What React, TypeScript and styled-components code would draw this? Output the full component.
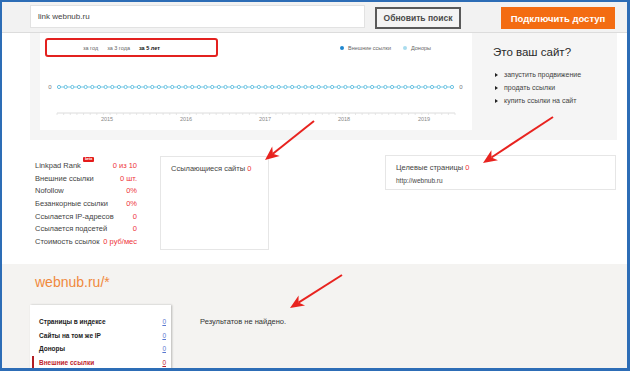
import React from "react";
import styled, { createGlobalStyle } from "styled-components";

const GlobalStyle = createGlobalStyle`
  html, body {
    margin: 0;
    padding: 0;
    background: #ffffff;
  }
  body {
    font-family: "Liberation Sans", Arial, sans-serif;
    color: #333;
  }
  * {
    box-sizing: border-box;
  }
`;

const Frame = styled.div`
  position: relative;
  width: 630px;
  height: 371px;
  border-top: 2px solid #2d6db6;
  border-left: 2px solid #2d6db6;
  border-right: 3px solid #2d6db6;
  border-bottom: 3px solid #2d6db6;
  overflow: hidden;
  display: flex;
  flex-direction: column;
  background: #fff;
`;

/* ---------- top bar ---------- */
const TopBar = styled.div`
  height: 31px;
  flex: none;
  background: #f2f2f2;
  border-bottom: 1px solid #dcdcdc;
  display: flex;
  align-items: flex-start;
  padding: 3px 0 0 28px;
`;

const SearchInput = styled.div`
  width: 335px;
  height: 23px;
  background: #fff;
  border: 1px solid #e2e2e2;
  display: flex;
  align-items: center;
  padding-left: 7px;
  font-size: 8px;
  color: #444;
`;

const RefreshButton = styled.div`
  margin: 2px 0 0 10px;
  width: 86px;
  height: 22px;
  border: 2px solid #5a5a5a;
  background: #f4f4f4;
  display: flex;
  align-items: center;
  justify-content: center;
  font-size: 8.5px;
  font-weight: bold;
  color: #4a4a4a;
`;

const AccessButton = styled.div`
  margin: 2px 0 0 40px;
  width: 114px;
  height: 22px;
  background: #f36c12;
  display: flex;
  align-items: center;
  justify-content: center;
  font-size: 9.5px;
  font-weight: bold;
  color: #fff;
`;

/* ---------- hero with chart ---------- */
const Hero = styled.div`
  height: 107px;
  flex: none;
  padding: 0 10px 0 28px;
  display: flex;
`;

const HeroInner = styled.div`
  flex: 1;
  background: #f5f5f5;
  display: flex;
  align-items: flex-start;
`;

const ChartPanel = styled.div`
  margin-left: 10px;
  width: 432px;
  height: 97px;
  background: #fff;
  display: flex;
  flex-direction: column;
`;

const ChartHeader = styled.div`
  height: 29px;
  padding: 5px 0 0 5px;
  display: flex;
  align-items: flex-start;
`;

const Tabs = styled.div`
  width: 173px;
  height: 19px;
  border: 2px solid #e3211f;
  border-radius: 3px;
  display: flex;
  align-items: center;
  padding-left: 36px;
  gap: 9px;
`;

const Tab = styled.span<{ $active?: boolean }>`
  font-size: 5.5px;
  color: ${(p) => (p.$active ? "#111" : "#666")};
  font-weight: ${(p) => (p.$active ? "bold" : "normal")};
`;

const Legend = styled.div`
  margin-left: 122px;
  height: 19px;
  display: flex;
  align-items: center;
  gap: 12px;
`;

const LegendItem = styled.span<{ $color: string }>`
  display: flex;
  align-items: center;
  gap: 4px;
  font-size: 5.5px;
  color: #666;
  &::before {
    content: "";
    width: 4px;
    height: 4px;
    border-radius: 50%;
    background: ${(p) => p.$color};
  }
`;

const SiteBox = styled.div`
  padding: 11px 0 0 21px;
  display: flex;
  flex-direction: column;
`;

const SiteTitle = styled.div`
  font-size: 11.5px;
  line-height: 16px;
  color: #2a2a2a;
  margin-bottom: 8px;
`;

const SiteLink = styled.div`
  display: flex;
  align-items: center;
  height: 13px;
  font-size: 7px;
  color: #444;
  &::before {
    content: "";
    width: 0;
    height: 0;
    border-top: 2px solid transparent;
    border-bottom: 2px solid transparent;
    border-left: 3px solid #222;
    margin: 0 6px 0 2px;
  }
`;

/* ---------- stats ---------- */
const Stats = styled.div`
  height: 124px;
  flex: none;
  padding: 15px 0 0 33px;
  display: flex;
  align-items: flex-start;
`;

const StatList = styled.div`
  width: 102px;
  padding-top: 4px;
  display: flex;
  flex-direction: column;
`;

const StatRow = styled.div`
  height: 12.7px;
  display: flex;
  align-items: center;
  justify-content: space-between;
  font-size: 7.5px;
  color: #444;
`;

const StatLabel = styled.span`
  display: flex;
  align-items: flex-start;
`;

const Beta = styled.span`
  margin: -4px 0 0 2px;
  background: #e41b1b;
  color: #fff;
  font-size: 3.5px;
  font-weight: bold;
  line-height: 5px;
  padding: 0 2px;
  border-radius: 1px;
`;

const Red = styled.span`
  color: #ee3338;
`;

const InfoBox = styled.div<{ $w: number; $h: number; $ml: number; $mt: number }>`
  width: ${(p) => p.$w}px;
  height: ${(p) => p.$h}px;
  margin-left: ${(p) => p.$ml}px;
  margin-top: ${(p) => p.$mt}px;
  border: 1px solid #e6e6e6;
  padding: 5px 10px;
  font-size: 7.5px;
  color: #444;
`;

const BoxLine = styled.div<{ $small?: boolean }>`
  line-height: 13px;
  font-size: ${(p) => (p.$small ? "6.5px" : "7.5px")};
`;

/* ---------- bottom ---------- */
const Bottom = styled.div`
  flex: 1;
  background: #f4f3f1;
  display: flex;
  flex-direction: column;
  padding-top: 10px;
`;

const DomainTitle = styled.div`
  padding-left: 33px;
  font-size: 14px;
  line-height: 17px;
  color: #f0893d;
`;

const BottomRow = styled.div`
  flex: 1;
  margin-top: 14px;
  padding-left: 28px;
  display: flex;
`;

const SideMenu = styled.div`
  width: 141px;
  background: #fff;
  box-shadow: 1px 0 2px rgba(0, 0, 0, 0.25);
  padding-top: 10px;
  display: flex;
  flex-direction: column;
`;

const MenuItem = styled.div<{ $active?: boolean }>`
  height: 13.5px;
  margin-left: 2px;
  border-left: 2px solid ${(p) => (p.$active ? "#b21e24" : "transparent")};
  padding: 0 5px 0 5px;
  display: flex;
  align-items: center;
  justify-content: space-between;
  font-size: 6.5px;
  font-weight: bold;
  color: ${(p) => (p.$active ? "#c0242b" : "#222")};
`;

const MenuCount = styled.span<{ $active?: boolean }>`
  font-weight: normal;
  text-decoration: underline;
  color: ${(p) => (p.$active ? "#c0242b" : "#5a78d0")};
`;

const Results = styled.div`
  margin-left: 29px;
  padding-top: 12px;
  font-size: 7.5px;
  color: #333;
`;

const Overlay = styled.svg`
  position: absolute;
  left: -2px;
  top: -2px;
  pointer-events: none;
`;

const arrow = (x1: number, y1: number, x2: number, y2: number) => {
  const dx = x2 - x1;
  const dy = y2 - y1;
  const len = Math.hypot(dx, dy);
  const ux = dx / len;
  const uy = dy / len;
  const nx = -uy;
  const ny = ux;
  const hl = 14;
  const hw = 6;
  const bx = x2 - ux * hl;
  const by = y2 - uy * hl;
  const mx = x2 - ux * hl * 0.72;
  const my = y2 - uy * hl * 0.72;
  const pts = [
    [x2, y2],
    [bx + nx * hw, by + ny * hw],
    [mx, my],
    [bx - nx * hw, by - ny * hw],
  ]
    .map((p) => p.join(","))
    .join(" ");
  return (
    <g key={`${x1}-${y1}`}>
      <line x1={x1} y1={y1} x2={mx} y2={my} stroke="#e8231f" strokeWidth="2" />
      <polygon points={pts} fill="#e8231f" />
    </g>
  );
};

const stats: [string, string][] = [
  ["Linkpad Rank", "0 из 10"],
  ["Внешние ссылки", "0 шт."],
  ["Nofollow", "0%"],
  ["Безанкорные ссылки", "0%"],
  ["Ссылается IP-адресов", "0"],
  ["Ссылается подсетей", "0"],
  ["Стоимость ссылок", "0 руб/мес"],
];

const menu = ["Страницы в индексе", "Сайты на том же IP", "Доноры", "Внешние ссылки"];

const Chart = () => {
  const dots = Array.from({ length: 60 }, (_, i) => 19 + (i * 393) / 59);
  const ticks = Array.from({ length: 61 }, (_, i) => 17 + (i * 398) / 60);
  const years = [
    ["2015", 67],
    ["2016", 146],
    ["2017", 225],
    ["2018", 304],
    ["2019", 384],
  ] as const;
  return (
    <svg width="432" height="68" viewBox="0 0 432 68">
      <text x="10" y="27" fontSize="6" fill="#777" textAnchor="middle" fontFamily="Liberation Sans">0</text>
      <text x="421" y="27" fontSize="6" fill="#777" textAnchor="middle" fontFamily="Liberation Sans">0</text>
      <line x1="19" y1="25" x2="412" y2="25" stroke="#7ccbe6" strokeWidth="1" />
      {dots.map((x, i) => (
        <circle key={i} cx={x} cy="25" r="1.6" fill="#fff" stroke="#6cc3e2" strokeWidth="1" />
      ))}
      <line x1="17" y1="51" x2="415" y2="51" stroke="#dcdcdc" strokeWidth="1" />
      {ticks.map((x, i) => (
        <line key={i} x1={x} y1="51" x2={x} y2="53" stroke="#e0e0e0" strokeWidth="0.8" />
      ))}
      {years.map(([y, x]) => (
        <text key={y} x={x} y="58.5" fontSize="5.5" fill="#888" textAnchor="middle" fontFamily="Liberation Sans">
          {y}
        </text>
      ))}
    </svg>
  );
};

export default function App() {
  return (
    <>
      <GlobalStyle />
      <Frame>
        <TopBar>
          <SearchInput>link webnub.ru</SearchInput>
          <RefreshButton>Обновить поиск</RefreshButton>
          <AccessButton>Подключить доступ</AccessButton>
        </TopBar>

        <Hero>
          <HeroInner>
            <ChartPanel>
              <ChartHeader>
                <Tabs>
                  <Tab>за год</Tab>
                  <Tab>за 3 года</Tab>
                  <Tab $active>за 5 лет</Tab>
                </Tabs>
                <Legend>
                  <LegendItem $color="#1f87cf">Внешние ссылки</LegendItem>
                  <LegendItem $color="#a9dcee">Доноры</LegendItem>
                </Legend>
              </ChartHeader>
              <Chart />
            </ChartPanel>
            <SiteBox>
              <SiteTitle>Это ваш сайт?</SiteTitle>
              <SiteLink>запустить продвижение</SiteLink>
              <SiteLink>продать ссылки</SiteLink>
              <SiteLink>купить ссылки на сайт</SiteLink>
            </SiteBox>
          </HeroInner>
        </Hero>

        <Stats>
          <StatList>
            {stats.map(([label, value], i) => (
              <StatRow key={label}>
                <StatLabel>
                  {label}
                  {i === 0 && <Beta>beta</Beta>}
                </StatLabel>
                <Red>{value}</Red>
              </StatRow>
            ))}
          </StatList>
          <InfoBox $w={109} $h={94} $ml={23} $mt={1}>
            <BoxLine>
              Ссылающиеся сайты <Red>0</Red>
            </BoxLine>
          </InfoBox>
          <InfoBox $w={231} $h={35} $ml={116} $mt={0}>
            <BoxLine>
              Целевые страницы <Red>0</Red>
            </BoxLine>
            <BoxLine $small>http://webnub.ru</BoxLine>
          </InfoBox>
        </Stats>

        <Bottom>
          <DomainTitle>webnub.ru/*</DomainTitle>
          <BottomRow>
            <SideMenu>
              {menu.map((m, i) => (
                <MenuItem key={m} $active={i === 3}>
                  {m}
                  <MenuCount $active={i === 3}>0</MenuCount>
                </MenuItem>
              ))}
            </SideMenu>
            <Results>Результатов не найдено.</Results>
          </BottomRow>
        </Bottom>

        <Overlay width="630" height="371" viewBox="0 0 630 371">
          {arrow(314, 121, 265, 160)}
          {arrow(553, 117, 483, 163)}
          {arrow(342, 275, 290, 308)}
        </Overlay>
      </Frame>
    </>
  );
}
